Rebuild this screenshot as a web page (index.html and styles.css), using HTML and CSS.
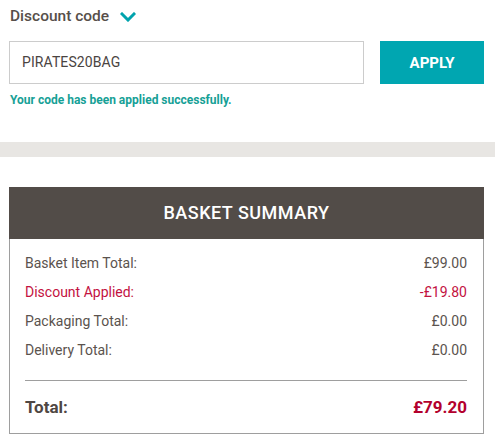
FILE: index.html
```html
<!DOCTYPE html>
<html>
<head>
<meta charset="utf-8">
<link rel="stylesheet" href="styles.css">
</head>
<body>
<section class="discount">
  <div class="discount-head">
    <span class="discount-title">Discount code</span>
    <svg class="chev" width="16" height="10" viewBox="0 0 16 10"><path d="M2 2 L8 8 L14 2" fill="none" stroke="#00a3ad" stroke-width="3" stroke-linecap="square"/></svg>
  </div>
  <div class="discount-form">
    <div class="code-input">PIRATES20BAG</div>
    <button class="apply">APPLY</button>
  </div>
  <p class="success">Your code has been applied successfully.</p>
</section>
<div class="band"></div>
<section class="summary">
  <div class="summary-head">BASKET SUMMARY</div>
  <div class="summary-body">
    <div class="row"><span>Basket Item Total:</span><span>£99.00</span></div>
    <div class="row discount-row"><span>Discount Applied:</span><span>-£19.80</span></div>
    <div class="row"><span>Packaging Total:</span><span>£0.00</span></div>
    <div class="row"><span>Delivery Total:</span><span>£0.00</span></div>
    <div class="total"><span>Total:</span><span class="total-val">£79.20</span></div>
  </div>
</section>
</body>
</html>
```
FILE: styles.css
```css
* { box-sizing: border-box; }
body {
  margin: 0;
  font-family: Roboto, "Liberation Sans", sans-serif;
  color: #5b534e;
  background: #fff;
}
.discount {
  padding: 7px 11px 0 9px;
}
.discount-head {
  display: flex;
  align-items: center;
  gap: 11px;
  padding-left: 1px;
  height: 18px;
}
.discount-title {
  font-size: 15.5px;
  font-weight: 500;
  color: #574f4a;
}
.chev { margin-top: 1px; }
.discount-form {
  display: flex;
  gap: 16px;
  margin-top: 16px;
}
.code-input {
  width: 355px;
  height: 43px;
  border: 1px solid #cccccc;
  padding-left: 12px;
  font-size: 14px;
  line-height: 41px;
  color: #4a4441;
  letter-spacing: 0.1px;
}
.apply {
  width: 104px;
  height: 43px;
  border: none;
  background: #00a6b1;
  color: #fff;
  font-family: Roboto, "Liberation Sans", sans-serif;
  font-size: 15px;
  font-weight: 700;
  padding: 0;
}
.success {
  margin: 9px 0 0 1px;
  font-size: 12px;
  font-weight: 700;
  color: #16a096;
  line-height: 14px;
}
.band {
  margin-top: 35px;
  height: 15px;
  background: #e8e6e3;
}
.summary {
  margin: 30px 11px 0 9px;
  border: 1px solid #9e9e9e;
  border-top: none;
}
.summary-head {
  height: 52px;
  margin: 0 -1px;
  background: #524c48;
  color: #fff;
  font-size: 18px;
  font-weight: 500;
  letter-spacing: 0.5px;
  text-align: center;
  line-height: 52px;
}
.summary-body {
  padding: 10px 16px 0 15px;
}
.row {
  display: flex;
  justify-content: space-between;
  font-size: 14px;
  line-height: 29px;
}
.discount-row { color: #c3123f; }
.total {
  display: flex;
  justify-content: space-between;
  align-items: center;
  margin-top: 15px;
  border-top: 1px solid #9e9e9e;
  padding: 13px 0 12px;
  line-height: 27px;
  font-size: 17px;
  font-weight: 700;
  color: #4f4743;
}
.total-val { color: #b3002d; }
```
